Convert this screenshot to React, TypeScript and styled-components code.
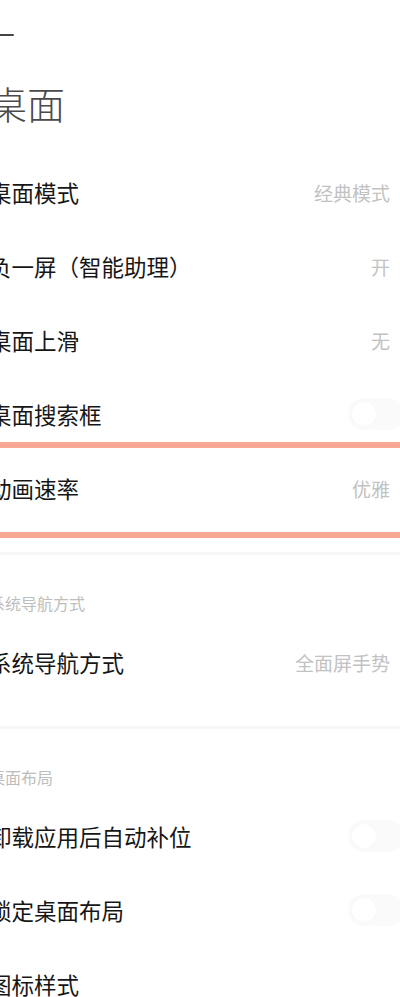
import React from 'react'
import styled, { createGlobalStyle } from 'styled-components'

const GlobalStyle = createGlobalStyle`
  html, body {
    margin: 0;
    padding: 0;
    background: #ffffff;
    overflow-x: hidden;
  }
  body {
    font-family: "Noto Sans CJK SC", "Noto Sans", sans-serif;
  }
`

const Page = styled.div`
  width: 400px;
  height: 997px;
  overflow: hidden;
  background: #fff;
`

// the shot is cropped: the left edge of every text is cut
const Content = styled.div`
  margin-left: -11px;
  width: 415px;
`

const TopBar = styled.div`
  height: 70px;
  display: flex;
  align-items: center;
`

const Title = styled.h1`
  margin: 0;
  padding: 8px 0 27px;
  font-size: 38px;
  line-height: 50px;
  font-weight: 300;
  color: #4a4a4a;
`

const Group = styled.div`
  padding-bottom: 27px;
`

const Divider = styled.div`
  height: 3px;
  background: #f7f7f7;
`

const SectionHeader = styled.div`
  padding: 40px 0 14px;
  font-size: 16px;
  line-height: 16px;
  color: #bdbdbd;
`

const Row = styled.div<{ $marked?: boolean }>`
  position: relative;
  height: 74px;
  display: flex;
  align-items: center;
  justify-content: space-between;

  ${({ $marked }) =>
    $marked &&
    `
    &::before, &::after {
      content: '';
      position: absolute;
      left: 0;
      right: 0;
      height: 6px;
      background: #f7a994;
    }
    &::before { top: -9px; }
    &::after { bottom: -13px; }
  `}
`

const Label = styled.span`
  font-size: 22.5px;
  color: #161616;
  white-space: nowrap;
`

const Value = styled.span`
  margin-right: 14px;
  font-size: 19px;
  color: #c2c2c2;
  white-space: nowrap;
`

const Track = styled.div`
  display: flex;
  align-items: center;
  width: 56px;
  height: 32px;
  padding: 0 4px;
  box-sizing: border-box;
  border-radius: 16px;
  background: #fafafa;
`

const Knob = styled.div`
  width: 24px;
  height: 24px;
  border-radius: 50%;
  background: #fff;
  box-shadow: 0 0 2px rgba(0, 0, 0, 0.04);
`

const Toggle = () => (
  <Track>
    <Knob />
  </Track>
)

const BackArrow = () => (
  <svg width="26" height="26" viewBox="0 0 26 26" fill="none">
    <path
      d="M2 13 H24 M2 13 L8 7 M2 13 L8 19"
      stroke="#444"
      strokeWidth="2"
      strokeLinecap="round"
    />
  </svg>
)

type Item = { label: string; value?: string; toggle?: boolean; marked?: boolean }

const desktop: Item[] = [
  { label: '桌面模式', value: '经典模式' },
  { label: '负一屏（智能助理）', value: '开' },
  { label: '桌面上滑', value: '无' },
  { label: '桌面搜索框', toggle: true },
  { label: '动画速率', value: '优雅', marked: true },
]

const nav: Item[] = [{ label: '系统导航方式', value: '全面屏手势' }]

const layout: Item[] = [
  { label: '卸载应用后自动补位', toggle: true },
  { label: '锁定桌面布局', toggle: true },
  { label: '图标样式' },
]

const SettingRow = ({ item }: { item: Item }) => (
  <Row $marked={item.marked}>
    <Label>{item.label}</Label>
    {item.value && <Value>{item.value}</Value>}
    {item.toggle && <Toggle />}
  </Row>
)

export default function App() {
  return (
    <Page>
      <GlobalStyle />
      <Content>
        <TopBar>
          <BackArrow />
        </TopBar>
        <Title>桌面</Title>

        <Group>
          {desktop.map((it) => (
            <SettingRow key={it.label} item={it} />
          ))}
        </Group>
        <Divider />

        <SectionHeader>系统导航方式</SectionHeader>
        <Group>
          {nav.map((it) => (
            <SettingRow key={it.label} item={it} />
          ))}
        </Group>
        <Divider />

        <SectionHeader>桌面布局</SectionHeader>
        {layout.map((it) => (
          <SettingRow key={it.label} item={it} />
        ))}
      </Content>
    </Page>
  )
}
